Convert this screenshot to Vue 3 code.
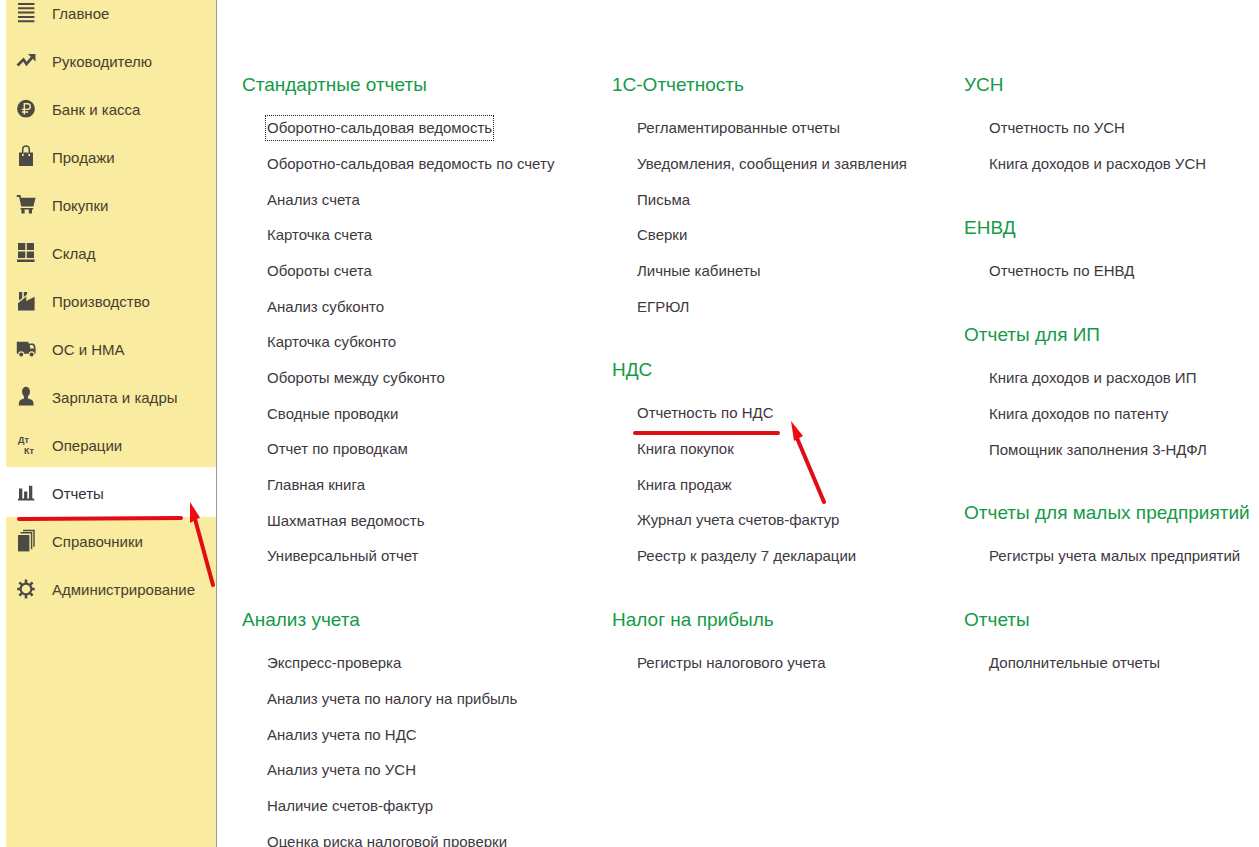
<script setup>
const navItems = [
  { id: 'home', label: 'Главное' },
  { id: 'chief', label: 'Руководителю' },
  { id: 'bank', label: 'Банк и касса' },
  { id: 'sales', label: 'Продажи' },
  { id: 'purchases', label: 'Покупки' },
  { id: 'stock', label: 'Склад' },
  { id: 'production', label: 'Производство' },
  { id: 'assets', label: 'ОС и НМА' },
  { id: 'salary', label: 'Зарплата и кадры' },
  { id: 'operations', label: 'Операции' },
  { id: 'reports', label: 'Отчеты', active: true },
  { id: 'catalogs', label: 'Справочники' },
  { id: 'admin', label: 'Администрирование' },
]

const columns = [
  [
    {
      title: 'Стандартные отчеты',
      items: [
        'Оборотно-сальдовая ведомость',
        'Оборотно-сальдовая ведомость по счету',
        'Анализ счета',
        'Карточка счета',
        'Обороты счета',
        'Анализ субконто',
        'Карточка субконто',
        'Обороты между субконто',
        'Сводные проводки',
        'Отчет по проводкам',
        'Главная книга',
        'Шахматная ведомость',
        'Универсальный отчет',
      ],
    },
    {
      title: 'Анализ учета',
      items: [
        'Экспресс-проверка',
        'Анализ учета по налогу на прибыль',
        'Анализ учета по НДС',
        'Анализ учета по УСН',
        'Наличие счетов-фактур',
        'Оценка риска налоговой проверки',
      ],
    },
  ],
  [
    {
      title: '1С-Отчетность',
      items: [
        'Регламентированные отчеты',
        'Уведомления, сообщения и заявления',
        'Письма',
        'Сверки',
        'Личные кабинеты',
        'ЕГРЮЛ',
      ],
    },
    {
      title: 'НДС',
      items: [
        'Отчетность по НДС',
        'Книга покупок',
        'Книга продаж',
        'Журнал учета счетов-фактур',
        'Реестр к разделу 7 декларации',
      ],
    },
    { title: 'Налог на прибыль', items: ['Регистры налогового учета'] },
  ],
  [
    { title: 'УСН', items: ['Отчетность по УСН', 'Книга доходов и расходов УСН'] },
    { title: 'ЕНВД', items: ['Отчетность по ЕНВД'] },
    {
      title: 'Отчеты для ИП',
      items: ['Книга доходов и расходов ИП', 'Книга доходов по патенту', 'Помощник заполнения 3-НДФЛ'],
    },
    { title: 'Отчеты для малых предприятий', items: ['Регистры учета малых предприятий'] },
    { title: 'Отчеты', items: ['Дополнительные отчеты'] },
  ],
]

const focused = 'Оборотно-сальдовая ведомость'
const marked = 'Отчетность по НДС'
</script>

<template>
  <div class="app">
    <nav class="sidebar" aria-label="Разделы">
      <ul class="nav-list">
        <li v-for="item in navItems" :key="item.id" class="nav-item" :class="{ active: item.active }">
          <a href="#" class="nav-link">
            <svg class="icon" viewBox="0 0 20 20" aria-hidden="true">
              <path v-if="item.id === 'home'" d="M2 0h16.4v2H2zM2 4.3h16.4v2H2zM2 8.6h16.4v2H2zM2 12.9h16.4v2H2zM2 17.2h16.4v2H2z" />
              <g v-else-if="item.id === 'chief'">
                <path d="M1.5 14.5 7.5 8.5 10.5 13 17 5.5" fill="none" stroke="currentColor" stroke-width="2.7" />
                <path d="M12 3H19.5V10.5z" />
              </g>
              <g v-else-if="item.id === 'bank'">
                <circle cx="10" cy="9.7" r="8.9" />
                <path d="M8.3 15.6V4.8h3.2a2.7 2.7 0 0 1 0 5.6H5.8M5.8 13H12" fill="none" stroke="#f9eb9f" stroke-width="1.4" />
              </g>
              <g v-else-if="item.id === 'sales'">
                <path d="M3 5.5h3V9h1.6V5.5h4.8V9H14V5.5H17V19H3z" />
                <path d="M6.7 7V2Q6.9-1 10-1t3.3 3V7" fill="none" stroke="currentColor" stroke-width="1.5" />
              </g>
              <path v-else-if="item.id === 'purchases'" d="M.8 0H4.4L5.1 2.8H19.6L17.4 11.6H5.2L3.2 2H.8zM4.6 13H17.2V14.6H16V18.6H12.8V14.6H8.6V18.6H5.4V14.6H4.6z" />
              <path v-else-if="item.id === 'stock'" d="M2 0h7.3v7H2zM10.8 0H18v7h-7.2zM2 8.4h7.3V15H2zM10.8 8.4H18V15h-7.2zM1 16.6h17.6V19H1z" />
              <path v-else-if="item.id === 'production'" d="M3 1h3.2v6.2L3 9.4zM7.8 1H11v2.4L7.8 6zM2 12.2 10.3 5.6V10L18.6 5.8V19.5H2z" />
              <g v-else-if="item.id === 'assets'">
                <path fill-rule="evenodd" d="M.8 2.8H12.4V4.4H17.3Q19.6 5.4 19.6 10.5V14.8H.8zM14 6V9.6H18Q17.8 6.6 16.5 6z" />
                <circle cx="5.2" cy="15.3" r="3" fill="#f9eb9f" />
                <circle cx="15.6" cy="15.3" r="3" fill="#f9eb9f" />
                <circle cx="5.2" cy="15.4" r="2" />
                <circle cx="15.6" cy="15.4" r="2" />
              </g>
              <g v-else-if="item.id === 'salary'">
                <ellipse cx="10" cy="4.8" rx="4" ry="5" />
                <path d="M8 9h4v2.4l3.6 1.4q2 .9 2 5.8H2.8q0-4.9 2-5.8L8 11.4z" />
              </g>
              <g v-else-if="item.id === 'operations'" class="icon-text">
                <text x="2" y="8">Дт</text>
                <text x="8" y="19">Кт</text>
              </g>
              <path v-else-if="item.id === 'reports'" d="M3 5.4h3.3V15.5H3zM8.1 8.4h3.2v7.1H8.1zM13 2.7h3.3v12.8H13zM2 15.5h16.2v1.9H2z" />
              <g v-else-if="item.id === 'catalogs'">
                <path d="M2 4H13.4V20.4H2z" />
                <path d="M4.5 1.8H15.6V18.2M7-.5H18V15.8" fill="none" stroke="currentColor" stroke-width="1.4" />
              </g>
              <g v-else fill="none" stroke="currentColor">
                <circle cx="10" cy="10" r="5.4" stroke-width="2.2" />
                <path d="M10 4.5V.6M10 15.5V19.4M4.5 10H1.2M15.5 10H18.8M6.1 6.1 3.4 3.4M13.9 13.9 16.6 16.6M13.9 6.1 16.6 3.4M6.1 13.9 3.4 16.6" stroke-width="2.6" />
              </g>
            </svg>
            <span>{{ item.label }}</span>
          </a>
          <svg v-if="item.active" class="mark nav-mark" viewBox="0 0 211 125" aria-hidden="true">
            <path class="mark-line" d="M13 50 175 49M189 50 207 116" />
            <path d="M184 33 194 48.5 184 54z" />
          </svg>
        </li>
      </ul>
    </nav>

    <main class="content">
      <div v-for="(column, index) in columns" :key="index" class="column">
        <section v-for="section in column" :key="section.title" class="section">
          <h2 class="title">{{ section.title }}</h2>
          <ul class="links">
            <li v-for="item in section.items" :key="item" class="row">
              <a href="#" class="link" :class="{ focused: item === focused }">{{ item }}</a>
              <svg v-if="item === marked" class="mark link-mark" viewBox="0 0 200 100" aria-hidden="true">
                <path class="mark-line" d="M10 38H153M172 43 199 107" />
                <path d="M166 26 178 41 169 46z" />
              </svg>
            </li>
          </ul>
        </section>
      </div>
    </main>
  </div>
</template>

<style>
body {
  margin: 0;
  background: #fff;
}
</style>

<style scoped>
.app {
  display: flex;
  height: 100vh;
  overflow: hidden;
  padding-left: 6px;
  box-sizing: border-box;
  font-family: "Liberation Sans", Arial, sans-serif;
  font-size: 15px;
  color: #40383f;
}
ul {
  list-style: none;
  margin: 0;
  padding: 0;
}
a {
  color: inherit;
  text-decoration: none;
}
.sidebar {
  flex: 0 0 210px;
  background: #f9eb9f;
  border-right: 1px solid #a09c8c;
  color: #45402f;
}
.nav-list {
  margin-top: -11px;
}
.nav-item {
  position: relative;
  height: 48px;
}
.nav-link {
  display: flex;
  align-items: center;
  gap: 16px;
  height: 100%;
  padding-left: 10px;
  white-space: nowrap;
}
.active {
  z-index: 1;
  color: #33303a;
}
.active .nav-link {
  background: #fff;
  box-shadow: 0 -2px #fff;
}
.icon {
  flex: none;
  width: 20px;
  height: 20px;
  overflow: visible;
  color: #4b4a45;
  fill: currentColor;
}
.icon-text {
  font-size: 9px;
  font-weight: bold;
}
.mark {
  position: absolute;
  overflow: visible;
  pointer-events: none;
  fill: #f00a12;
}
.mark-line {
  fill: none;
  stroke: #e30b14;
  stroke-width: 4px;
  stroke-linecap: round;
}
.nav-mark {
  left: 0;
  top: 0;
  width: 211px;
  height: 125px;
}
.link-mark {
  left: -12px;
  top: 0;
  width: 200px;
  height: 100px;
}
.content {
  flex: 1;
  display: grid;
  grid-template-columns: minmax(0, 370fr) minmax(0, 352fr) minmax(0, 295fr);
  align-items: start;
  padding: 67px 0 0 25px;
}
.section {
  margin-bottom: 28px;
}
.title {
  margin: 0 0 7px;
  font-size: 19px;
  font-weight: normal;
  line-height: 36px;
  color: #159a48;
  white-space: nowrap;
}
.links {
  padding-left: 25px;
}
.row {
  position: relative;
  display: flex;
  align-items: center;
  height: 36px;
}
.row:nth-child(3n) {
  height: 35px;
}
.link {
  white-space: nowrap;
  line-height: 24px;
}
.focused {
  margin: 0 -2px;
  padding: 0 1px;
  border: 1px dotted #222;
}
</style>
